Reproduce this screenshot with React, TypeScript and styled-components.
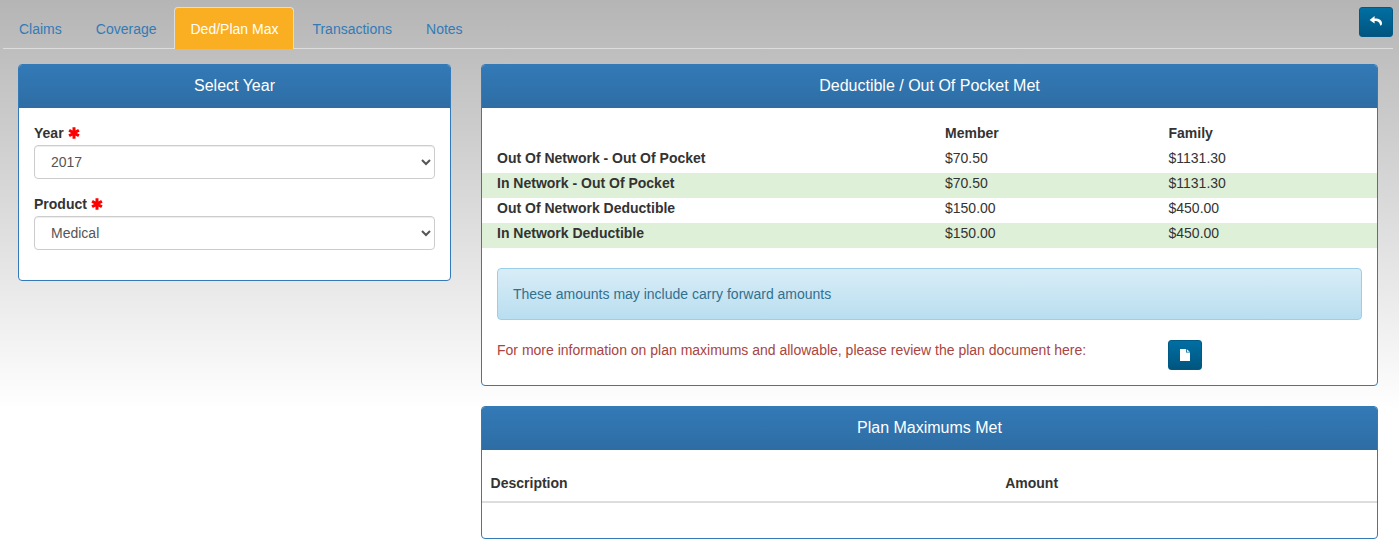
import React from "react";
import styled, { createGlobalStyle } from "styled-components";

const Global = createGlobalStyle`
  html, body { margin: 0; padding: 0; background: #fff; }
  body {
    font-family: "Liberation Sans", Arial, sans-serif;
    font-size: 14px;
    line-height: 20px;
    color: #333;
    background: linear-gradient(to bottom, #b5b5b5 0, #ffffff 410px) no-repeat;
    min-height: 549px;
    overflow: hidden;
  }
`;

const Page = styled.div`
  width: 1399px;
  height: 549px;
  box-sizing: border-box;
  padding: 7px 6px 0 3px;
`;

const TabBar = styled.div`
  display: flex;
  align-items: flex-start;
  justify-content: space-between;
  height: 42px;
  box-sizing: border-box;
  border-bottom: 1px solid #ddd;
`;

const Tabs = styled.nav`
  display: flex;
  align-items: flex-start;
`;

const Tab = styled.a<{ $active?: boolean }>`
  display: block;
  height: ${(p) => (p.$active ? "42px" : "41px")};
  box-sizing: border-box;
  padding: 11px 15px 0;
  margin-right: 2px;
  border: 1px solid ${(p) => (p.$active ? "#ddd" : "transparent")};
  border-bottom: 0;
  border-radius: 4px 4px 0 0;
  background: ${(p) => (p.$active ? "#faae21" : "transparent")};
  color: ${(p) => (p.$active ? "#fff" : "#337ab7")};
  font-size: 14px;
  line-height: 20px;
  white-space: nowrap;
`;

const IconButton = styled.button`
  display: flex;
  align-items: center;
  justify-content: center;
  width: 34px;
  height: 30px;
  padding: 0;
  border: 1px solid #015a85;
  border-radius: 3px;
  background: linear-gradient(to bottom, #006fa3 0, #00557f 100%);
  color: #fff;
`;

const Columns = styled.div`
  display: grid;
  grid-template-columns: 433px 897px;
  column-gap: 30px;
  padding: 15px 0 0 15px;
`;

const Stack = styled.div`
  display: flex;
  flex-direction: column;
  gap: 20px;
`;

const Panel = styled.section<{ $h: number }>`
  height: ${(p) => p.$h}px;
  box-sizing: border-box;
  border: 1px solid #337ab7;
  border-radius: 4px;
  background: #fff;
  overflow: hidden;
`;

const PanelHeading = styled.h3`
  height: 43px;
  margin: -1px -1px 0;
  padding-top: 1px;
  background: linear-gradient(to bottom, #337ab7 0, #2e6da4 100%);
  color: #fff;
  font-size: 16px;
  font-weight: 400;
  line-height: 42px;
  text-align: center;
`;

const FormBody = styled.div`
  padding: 15px 15px 0;
`;

const Field = styled.div`
  margin-bottom: 15px;
`;

const Label = styled.label`
  display: flex;
  align-items: center;
  gap: 4px;
  height: 20px;
  margin-bottom: 2px;
  font-weight: 700;
  line-height: 20px;
`;

const Star = styled.svg`
  flex: none;
  width: 12px;
  height: 12px;
`;

const Select = styled.select`
  display: block;
  width: 100%;
  height: 34px;
  padding: 6px 12px;
  box-sizing: border-box;
  border: 1px solid #ccc;
  border-radius: 4px;
  background: #fff;
  box-shadow: inset 0 1px 1px rgba(0, 0, 0, 0.075);
  color: #555;
  font-family: inherit;
  font-size: 14px;
`;

const SummaryTable = styled.div`
  margin-top: 15px;
`;

const SummaryRow = styled.div<{ $green?: boolean }>`
  display: grid;
  grid-template-columns: 448px 223.5px 1fr;
  height: 25px;
  padding-left: 15px;
  line-height: 21px;
  background: ${(p) => (p.$green ? "#dff0d8" : "transparent")};
`;

const Strong = styled.span`
  font-weight: 700;
`;

const Alert = styled.div`
  height: 52px;
  box-sizing: border-box;
  margin: 20px 15px 0;
  padding: 15px;
  border: 1px solid #9acfea;
  border-radius: 4px;
  background: linear-gradient(to bottom, #d9edf7 0, #b9def0 100%);
  color: #31708f;
  line-height: 20px;
`;

const InfoLine = styled.div`
  display: grid;
  grid-template-columns: 671px auto;
  justify-content: start;
  align-items: start;
  margin: 20px 0 0 15px;
`;

const InfoText = styled.span`
  color: #a94442;
`;

const MaxTable = styled.div`
  margin-top: 20px;
`;

const MaxHead = styled.div`
  display: grid;
  grid-template-columns: 514.6px 1fr;
  height: 28px;
  padding: 3px 0 0 8.6px;
  border-bottom: 2px solid #ddd;
  font-weight: 700;
  line-height: 20px;
`;

function RequiredStar() {
  return (
    <Star viewBox="0 0 12 12" aria-hidden="true">
      <path d="M6 0.3 V11.7 M1.1 3.2 L10.9 8.8 M10.9 3.2 L1.1 8.8" stroke="#f00" strokeWidth="3" fill="none" />
    </Star>
  );
}

function ReplyIcon() {
  return (
    <svg width="14" height="14" viewBox="0 0 14 14" aria-hidden="true">
      <path d="M5.6 1 L0.6 4.9 L5.6 8.6 V6.1 C8.6 6 10.4 6.9 11.2 10.6 C12.4 10.4 13 9.6 13 8.2 C13 5 10 3.2 5.6 3.4 Z" fill="#fff" />
    </svg>
  );
}

function FileIcon() {
  return (
    <svg width="10" height="12" viewBox="0 0 10 12" aria-hidden="true">
      <path d="M0 0 H6 V3.4 H10 V12 H0 Z M6.8 0.2 L9.8 2.7 H6.8 Z" fill="#fff" />
    </svg>
  );
}

const summary = [
  { name: "Out Of Network - Out Of Pocket", member: "$70.50", family: "$1131.30", green: false },
  { name: "In Network - Out Of Pocket", member: "$70.50", family: "$1131.30", green: true },
  { name: "Out Of Network Deductible", member: "$150.00", family: "$450.00", green: false },
  { name: "In Network Deductible", member: "$150.00", family: "$450.00", green: true },
];

export default function App() {
  return (
    <Page>
      <Global />
      <TabBar>
        <Tabs>
          <Tab>Claims</Tab>
          <Tab>Coverage</Tab>
          <Tab $active>Ded/Plan Max</Tab>
          <Tab>Transactions</Tab>
          <Tab>Notes</Tab>
        </Tabs>
        <IconButton aria-label="Back">
          <ReplyIcon />
        </IconButton>
      </TabBar>
      <Columns>
        <Panel $h={217}>
          <PanelHeading>Select Year</PanelHeading>
          <FormBody>
            <Field>
              <Label>
                Year
                <RequiredStar />
              </Label>
              <Select defaultValue="2017">
                <option>2017</option>
              </Select>
            </Field>
            <Field>
              <Label>
                Product
                <RequiredStar />
              </Label>
              <Select defaultValue="Medical">
                <option>Medical</option>
              </Select>
            </Field>
          </FormBody>
        </Panel>
        <Stack>
          <Panel $h={322}>
            <PanelHeading>Deductible / Out Of Pocket Met</PanelHeading>
            <SummaryTable>
              <SummaryRow>
                <span />
                <Strong>Member</Strong>
                <Strong>Family</Strong>
              </SummaryRow>
              {summary.map((r) => (
                <SummaryRow key={r.name} $green={r.green}>
                  <Strong>{r.name}</Strong>
                  <span>{r.member}</span>
                  <span>{r.family}</span>
                </SummaryRow>
              ))}
            </SummaryTable>
            <Alert>These amounts may include carry forward amounts</Alert>
            <InfoLine>
              <InfoText>For more information on plan maximums and allowable, please review the plan document here:</InfoText>
              <IconButton aria-label="Plan document">
                <FileIcon />
              </IconButton>
            </InfoLine>
          </Panel>
          <Panel $h={133}>
            <PanelHeading>Plan Maximums Met</PanelHeading>
            <MaxTable>
              <MaxHead>
                <span>Description</span>
                <span>Amount</span>
              </MaxHead>
            </MaxTable>
          </Panel>
        </Stack>
      </Columns>
    </Page>
  );
}
